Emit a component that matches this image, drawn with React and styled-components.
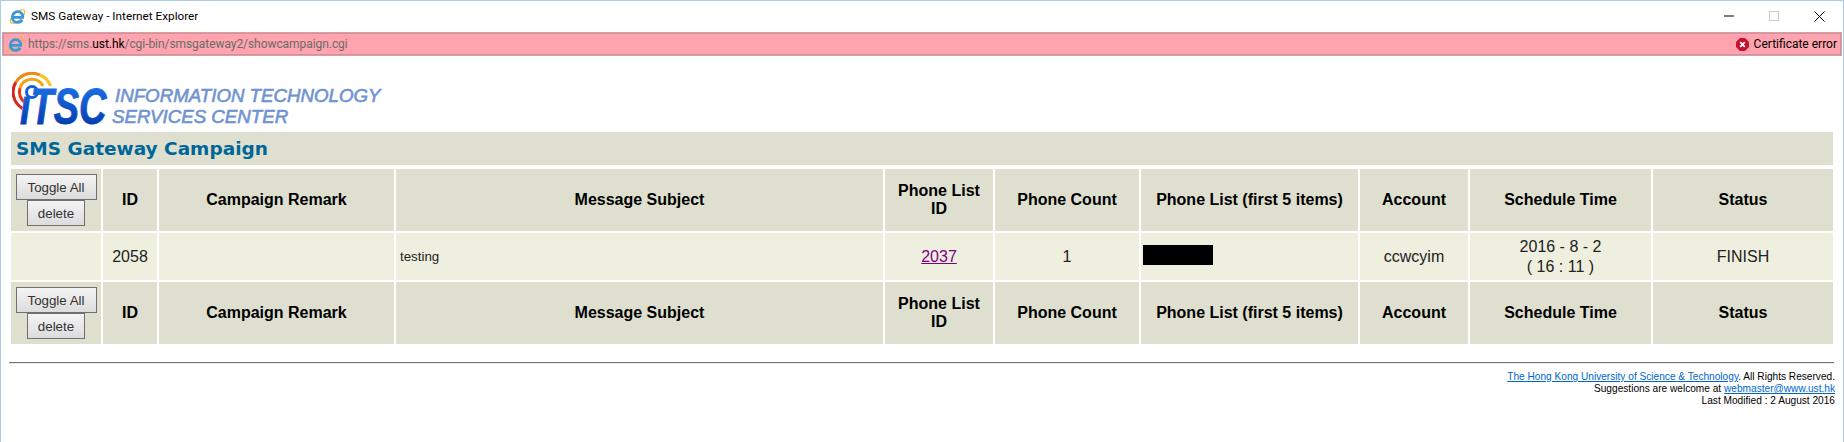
import React from 'react';
import styled, { createGlobalStyle } from 'styled-components';

const GlobalStyle = createGlobalStyle`
  html, body {
    margin: 0;
    padding: 0;
    background: #fff;
    overflow: hidden;
  }
`;

const Window = styled.div`
  box-sizing: border-box;
  height: 442px;
  border: 1px solid #a9cde9;
  border-bottom: 0;
  background: #fff;
  display: flex;
  flex-direction: column;
`;

const TitleBar = styled.div`
  height: 31px;
  display: flex;
  align-items: center;
  padding-left: 8px;
  font-family: Roboto, 'Noto Sans', sans-serif;
  font-size: 11.75px;
  color: #000;
`;

const TitleText = styled.span`
  margin-left: 5px;
  margin-top: -1px;
`;

const WindowControls = styled.div`
  margin-left: auto;
  display: flex;
  align-items: center;
  gap: 35px;
  padding-right: 18px;
  margin-top: -1px;
`;

const AddressBar = styled.div`
  box-sizing: border-box;
  height: 24px;
  margin: 0 1px;
  border: 1px solid #b0b0b0;
  display: flex;
`;

const AddressInner = styled.div`
  flex: 1;
  display: flex;
  align-items: center;
  padding: 0 3px;
  background: #ffa3af;
  border: 1px solid #f9808f;
  font-family: Roboto, 'Noto Sans', sans-serif;
  font-size: 12px;
  letter-spacing: -0.06px;
  color: #6b6b6b;
`;

const Url = styled.span`
  margin-left: 4px;

  b {
    font-weight: 400;
    color: #000;
  }
`;

const CertError = styled.div`
  margin-left: auto;
  display: flex;
  align-items: center;
  gap: 5px;
  letter-spacing: 0;
  color: #000;
`;

const Page = styled.div`
  padding: 16px 8px 0 8px;
  font-family: 'Liberation Sans', Arial, sans-serif;
`;

const LogoRow = styled.div`
  display: flex;
  align-items: flex-start;
  height: 60px;
  padding-left: 3px;
`;

const LogoMark = styled.svg`
  flex: none;
  margin-bottom: -3px;
`;

const LogoText = styled.div`
  margin-top: 13px;
  font-style: italic;
  font-size: 18.7px;
  line-height: 21px;
  color: #7093d2;
  -webkit-text-stroke: 0.6px #7093d2;
`;

const LogoLine = styled.div`
  margin-left: ${(p) => p.$indent || 0}px;
  white-space: nowrap;
`;

const Heading = styled.h1`
  margin: 0 2px;
  height: 33px;
  line-height: 33px;
  padding-left: 5px;
  background: #dedfcf;
  font-family: 'DejaVu Sans', Verdana, sans-serif;
  font-size: 18.5px;
  font-weight: 700;
  color: #006699;
`;

const Table = styled.table`
  width: 1826px;
  table-layout: fixed;
  border-collapse: separate;
  border-spacing: 2px;
  margin-top: 2px;
`;

const Col = styled.col`
  width: ${(p) => p.$w}px;
`;

const HeadCell = styled.th`
  height: 62px;
  padding: 0 2px;
  background: #dedfcf;
  font-size: 16px;
  font-weight: 700;
  text-align: center;
  color: #000;
`;

const Cell = styled.td`
  height: 47px;
  padding: 0 ${(p) => (p.$align ? 4 : 2)}px;
  background: #eeefdf;
  font-size: 16px;
  line-height: 20px;
  text-align: ${(p) => p.$align || 'center'};
  color: #222;
`;

const SubjectText = styled.span`
  font-size: 13.33px;
`;

const ListLink = styled.a`
  color: #800080;
  text-decoration: underline;
`;

const Redacted = styled.span`
  display: block;
  width: 70px;
  height: 20px;
  margin: 0 0 3px -2px;
  background: #000;
`;

const ButtonStack = styled.div`
  display: flex;
  flex-direction: column;
  align-items: center;
`;

const Button = styled.button`
  box-sizing: border-box;
  height: 26px;
  width: ${(p) => p.$w}px;
  padding: 0;
  border: 1px solid #707070;
  background: linear-gradient(#f4f4f4, #dcdcdc);
  font-family: 'Liberation Sans', Arial, sans-serif;
  font-size: 13.33px;
  color: #333;
`;

const Rule = styled.hr`
  margin: 16px 1px 0 0;
  height: 1px;
  border: 0;
  background: #707070;
  box-shadow: 0 1px 0 #ececec;
`;

const Footer = styled.div`
  margin-top: 8px;
  text-align: right;
  font-size: 10.15px;
  line-height: 12px;
  color: #000;
`;

const FooterLink = styled.a`
  color: #0066cc;
  text-decoration: underline;
`;

const IeIcon = () => (
  <svg width="17" height="17" viewBox="0 0 17 17">
    <ellipse
      cx="8.5"
      cy="8.5"
      rx="9"
      ry="4"
      transform="rotate(-42 8.5 8.5)"
      fill="none"
      stroke="#f2b632"
      strokeWidth="1.2"
    />
    <path
      d="M3.5 9.3h10.2c.3-3.4-2-5.6-5-5.6S3.3 6.1 3.3 9.2s2.2 5.2 5.2 5.2c2.2 0 3.9-1 4.7-2.7"
      fill="none"
      stroke="#3a98dc"
      strokeWidth="2.8"
    />
  </svg>
);

const ErrorIcon = () => (
  <svg width="13" height="13" viewBox="0 0 13 13">
    <path d="M4 0h5l4 4v5l-4 4H4L0 9V4z" fill="#c4122f" />
    <path d="M4.2 4.2l4.6 4.6M8.8 4.2l-4.6 4.6" stroke="#fff" strokeWidth="1.8" />
  </svg>
);

const WindowIcons = () => (
  <WindowControls>
    <svg width="10" height="10" viewBox="0 0 10 10">
      <path d="M0 5h10" stroke="#000" strokeWidth="1" />
    </svg>
    <svg width="10" height="10" viewBox="0 0 10 10">
      <rect x="0.5" y="0.5" width="9" height="9" fill="none" stroke="#ccc" />
    </svg>
    <svg width="11" height="11" viewBox="0 0 11 11">
      <path d="M0.5 0.5l10 10M10.5 0.5l-10 10" stroke="#000" strokeWidth="1" fill="none" />
    </svg>
  </WindowControls>
);

const ItscLogo = () => (
  <LogoMark width="100" height="63" viewBox="0 0 100 63">
    <defs>
      <linearGradient id="itscBlue" x1="0" y1="0" x2="0" y2="1">
        <stop offset="0" stopColor="#1f78ec" />
        <stop offset="1" stopColor="#0033a6" />
      </linearGradient>
    </defs>
    <path d="M10.5 36.4A19 19 0 0 1 4 10" fill="none" stroke="#d8261c" strokeWidth="3" />
    <path d="M4 10A19 19 0 0 1 28 3" fill="none" stroke="#ee8a12" strokeWidth="3" />
    <path d="M28 3A19 19 0 0 1 38.5 14" fill="none" stroke="#f4c51e" strokeWidth="3" />
    <path d="M14 31A12.5 12.5 0 0 1 8 16" fill="none" stroke="#e03c18" strokeWidth="3" />
    <path d="M8 16A12.5 12.5 0 0 1 31 14" fill="none" stroke="#f2a31a" strokeWidth="3" />
    <circle cx="20" cy="20" r="5.5" fill="#fff" stroke="#1560d8" strokeWidth="3" />
    <text
      transform="translate(8 52) scale(1 1.32)"
      fontFamily="'Liberation Sans', Arial, sans-serif"
      fontSize="38"
      fontWeight="700"
      fontStyle="italic"
      fill="url(#itscBlue)"
      stroke="url(#itscBlue)"
      strokeWidth="0.7"
    >
      ıTSC
    </text>
  </LogoMark>
);

const colWidths = [90, 54, 235, 487, 108, 144, 217, 108, 181, 180];

const HeaderRow = () => (
  <tr>
    <HeadCell>
      <ButtonStack>
        <Button type="button" $w={81}>Toggle All</Button>
        <Button type="button" $w={58}>delete</Button>
      </ButtonStack>
    </HeadCell>
    <HeadCell>ID</HeadCell>
    <HeadCell>Campaign Remark</HeadCell>
    <HeadCell>Message Subject</HeadCell>
    <HeadCell>Phone List<br />ID</HeadCell>
    <HeadCell>Phone Count</HeadCell>
    <HeadCell>Phone List (first 5 items)</HeadCell>
    <HeadCell>Account</HeadCell>
    <HeadCell>Schedule Time</HeadCell>
    <HeadCell>Status</HeadCell>
  </tr>
);

const App = () => (
  <>
    <GlobalStyle />
    <Window>
      <TitleBar>
        <IeIcon />
        <TitleText>SMS Gateway - Internet Explorer</TitleText>
        <WindowIcons />
      </TitleBar>
      <AddressBar>
        <AddressInner>
          <IeIcon />
          <Url>https://sms.<b>ust.hk</b>/cgi-bin/smsgateway2/showcampaign.cgi</Url>
          <CertError>
            <ErrorIcon />
            Certificate error
          </CertError>
        </AddressInner>
      </AddressBar>
      <Page>
        <LogoRow>
          <ItscLogo />
          <LogoText>
            <LogoLine $indent={3}>INFORMATION TECHNOLOGY</LogoLine>
            <LogoLine>SERVICES CENTER</LogoLine>
          </LogoText>
        </LogoRow>
        <Heading>SMS Gateway Campaign</Heading>
        <Table>
          <colgroup>
            {colWidths.map((w, i) => (
              <Col key={i} $w={w} />
            ))}
          </colgroup>
          <tbody>
            <HeaderRow />
            <tr>
              <Cell />
              <Cell>2058</Cell>
              <Cell />
              <Cell $align="left"><SubjectText>testing</SubjectText></Cell>
              <Cell><ListLink href="#2037">2037</ListLink></Cell>
              <Cell>1</Cell>
              <Cell $align="left"><Redacted /></Cell>
              <Cell>ccwcyim</Cell>
              <Cell>2016 - 8 - 2<br />( 16 : 11 )</Cell>
              <Cell>FINISH</Cell>
            </tr>
            <HeaderRow />
          </tbody>
        </Table>
        <Rule />
        <Footer>
          <FooterLink href="#hkust">The Hong Kong University of Science &amp; Technology</FooterLink>. All Rights Reserved.<br />
          Suggestions are welcome at <FooterLink href="#mail">webmaster@www.ust.hk</FooterLink><br />
          Last Modified : 2 August 2016
        </Footer>
      </Page>
    </Window>
  </>
);

export default App;
